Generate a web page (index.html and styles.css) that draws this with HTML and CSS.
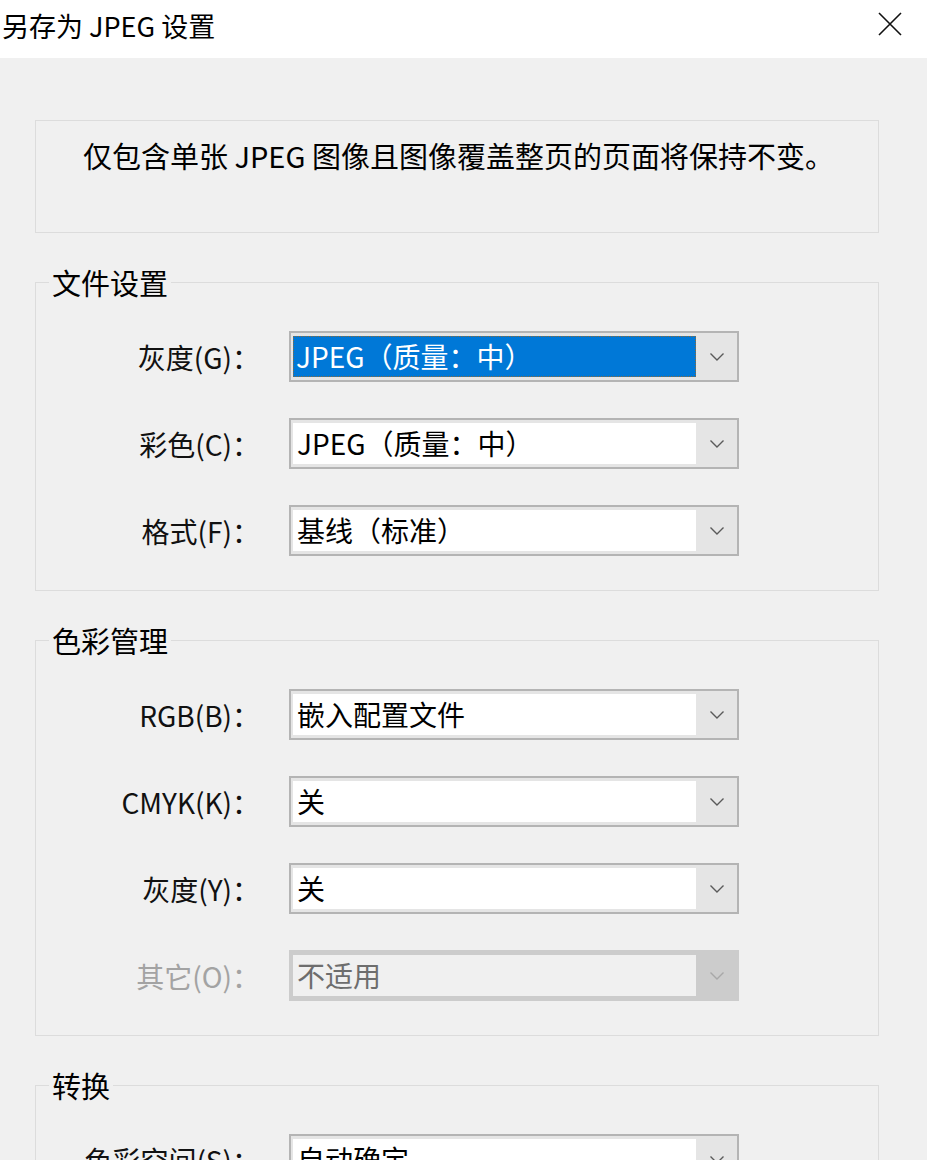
FILE: index.html
```html
<!DOCTYPE html>
<html lang="zh-CN">
<head>
  <meta charset="UTF-8" />
  <meta name="viewport" content="width=device-width, initial-scale=1.0" />
  <title>另存为 JPEG 设置</title>
  <link rel="stylesheet" href="styles.css">
</head>
<body>
  <div class="titlebar">
    <span class="title">另存为 JPEG 设置</span>
    <svg class="close" viewBox="0 0 24 24" width="24" height="24">
      <path d="M1 1 L23 23 M23 1 L1 23" stroke="#111" stroke-width="1.6" fill="none" />
    </svg>
  </div>

  <div class="content">
    <div class="note">仅包含单张 JPEG 图像且图像覆盖整页的页面将保持不变。</div>

    <fieldset class="group">
      <legend>文件设置</legend>
      <div class="rows">
        <label>灰度(G)：</label>
        <div class="combo">
          <span class="field focused">JPEG（质量：中）</span>
          <span class="drop"><svg viewBox="0 0 14 8" width="14" height="8"><path d="M0.5 0.5 L7 7 L13.5 0.5" /></svg></span>
        </div>

        <label>彩色(C)：</label>
        <div class="combo">
          <span class="field">JPEG（质量：中）</span>
          <span class="drop"><svg viewBox="0 0 14 8" width="14" height="8"><path d="M0.5 0.5 L7 7 L13.5 0.5" /></svg></span>
        </div>

        <label>格式(F)：</label>
        <div class="combo">
          <span class="field">基线（标准）</span>
          <span class="drop"><svg viewBox="0 0 14 8" width="14" height="8"><path d="M0.5 0.5 L7 7 L13.5 0.5" /></svg></span>
        </div>
      </div>
    </fieldset>

    <fieldset class="group">
      <legend>色彩管理</legend>
      <div class="rows">
        <label>RGB(B)：</label>
        <div class="combo">
          <span class="field">嵌入配置文件</span>
          <span class="drop"><svg viewBox="0 0 14 8" width="14" height="8"><path d="M0.5 0.5 L7 7 L13.5 0.5" /></svg></span>
        </div>

        <label>CMYK(K)：</label>
        <div class="combo">
          <span class="field">关</span>
          <span class="drop"><svg viewBox="0 0 14 8" width="14" height="8"><path d="M0.5 0.5 L7 7 L13.5 0.5" /></svg></span>
        </div>

        <label>灰度(Y)：</label>
        <div class="combo">
          <span class="field">关</span>
          <span class="drop"><svg viewBox="0 0 14 8" width="14" height="8"><path d="M0.5 0.5 L7 7 L13.5 0.5" /></svg></span>
        </div>

        <label class="disabled">其它(O)：</label>
        <div class="combo disabled">
          <span class="field">不适用</span>
          <span class="drop"><svg viewBox="0 0 14 8" width="14" height="8"><path d="M0.5 0.5 L7 7 L13.5 0.5" /></svg></span>
        </div>
      </div>
    </fieldset>

    <fieldset class="group">
      <legend>转换</legend>
      <div class="rows">
        <label>色彩空间(S)：</label>
        <div class="combo">
          <span class="field">自动确定</span>
          <span class="drop"><svg viewBox="0 0 14 8" width="14" height="8"><path d="M0.5 0.5 L7 7 L13.5 0.5" /></svg></span>
        </div>
      </div>
    </fieldset>
  </div>
</body>
</html>
```

FILE: styles.css
```css
body {
  margin: 0;
  background: #fff;
  font-family: "Noto Sans CJK SC", "Noto Sans", sans-serif;
  color: #000;
}
.titlebar {
  height: 58px;
  background: #fff;
  display: flex;
  align-items: center;
  justify-content: space-between;
  padding: 0 25px 0 2px;
}
.title {
  font-size: 27px;
  margin-top: -8px;
}
.close {
  margin-top: -10px;
}
.content {
  height: 1102px;
  overflow: hidden;
  background: #f0f0f0;
  padding: 62px 48px 0 35px;
  box-sizing: border-box;
}
.note {
  height: 113px;
  box-sizing: border-box;
  border: 1px solid #dcdcdc;
  padding: 14px 0 0 47px;
  font-size: 29px;
  line-height: 40px;
}
.group {
  margin: 34px 0 0;
  padding: 34px 0 34px;
  border: 1px solid #dcdcdc;
}
.group legend {
  margin-left: 13px;
  padding: 0 3px;
  font-size: 29px;
  line-height: 30px;
}
.rows {
  display: grid;
  grid-template-columns: 224px 450px;
  column-gap: 29px;
  row-gap: 36px;
  align-items: center;
}
.rows label {
  text-align: right;
  font-size: 28px;
  color: #111;
}
.rows label.disabled {
  color: #a3a3a3;
}
.combo {
  display: flex;
  height: 51px;
  box-sizing: border-box;
  border: 2px solid #b4b4b4;
  background: #e5e5e5;
  padding: 3px 0 3px 2px;
}
.field {
  flex: 1;
  background: #fff;
  padding-left: 4px;
  font-size: 28px;
  line-height: 41px;
  white-space: nowrap;
}
.field.focused {
  background: #0078d7;
  color: #fff;
  outline: 1px dotted #8a6a3a;
  outline-offset: -1px;
  padding-left: 3px;
}
.drop {
  width: 41px;
  display: flex;
  align-items: center;
  justify-content: center;
}
.drop svg path {
  fill: none;
  stroke: #5a5a5a;
  stroke-width: 1.4;
}
.combo.disabled {
  border-color: #cccccc;
  background: #cccccc;
}
.combo.disabled .field {
  background: #f0f0f0;
  color: #6d6d6d;
}
.combo.disabled .drop svg path {
  stroke: #a8a8a8;
}
```
